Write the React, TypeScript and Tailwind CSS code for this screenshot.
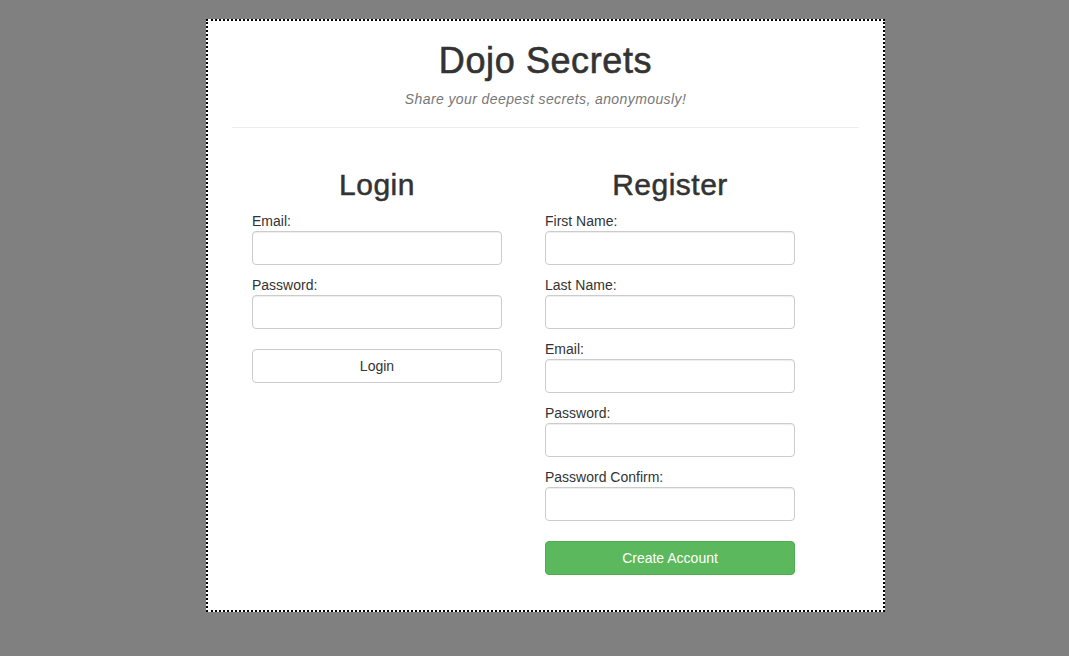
export default function App() {
  const loginFields = ["Email:", "Password:"];
  const registerFields = ["First Name:", "Last Name:", "Email:", "Password:", "Password Confirm:"];

  const field = (label: string, key: string) => (
    <div key={key} className="mb-[10px]">
      <label className="block text-[14px] leading-[20px] text-[#333]">{label}</label>
      <input
        type="text"
        className="block w-full h-[34px] rounded-[4px] border border-[#ccc] bg-white px-3 shadow-[inset_0_1px_1px_rgba(0,0,0,0.075)] outline-none"
      />
    </div>
  );

  return (
    <div className="min-h-[656px] bg-[#808080] pt-[19px] pl-[206px] font-['Liberation_Sans',Arial,sans-serif] text-[#333]">
      <div className="w-[679px] h-[593px] border-2 border-dotted border-black bg-white px-[24px]">
        <h1 className="mt-[20px] text-center text-[36px] leading-[40px] tracking-[0.6px] [-webkit-text-stroke:0.6px_#333]">
          Dojo Secrets
        </h1>
        <p className="mt-[8px] text-center text-[14px] leading-[20px] italic tracking-[0.4px] text-[#777]">
          Share your deepest secrets, anonymously!
        </p>
        <hr className="mt-[18px] border-t border-[#eee]" />

        <div className="flex pl-[20px] gap-[43px] mt-[40px]">
          <div className="w-[250px]">
            <h2 className="text-center text-[30px] leading-[33px] tracking-[0.5px] [-webkit-text-stroke:0.5px_#333] mb-[10px]">
              Login
            </h2>
            {loginFields.map((f, i) => field(f, "l" + i))}
            <button className="mt-[10px] w-full h-[34px] rounded-[4px] border border-[#ccc] bg-white text-[14px] text-[#333]">
              Login
            </button>
          </div>
          <div className="w-[250px]">
            <h2 className="text-center text-[30px] leading-[33px] tracking-[0.5px] [-webkit-text-stroke:0.5px_#333] mb-[10px]">
              Register
            </h2>
            {registerFields.map((f, i) => field(f, "r" + i))}
            <button className="mt-[10px] w-full h-[34px] rounded-[4px] border border-[#4cae4c] bg-[#5cb85c] text-[14px] text-white">
              Create Account
            </button>
          </div>
        </div>
      </div>
    </div>
  );
}
